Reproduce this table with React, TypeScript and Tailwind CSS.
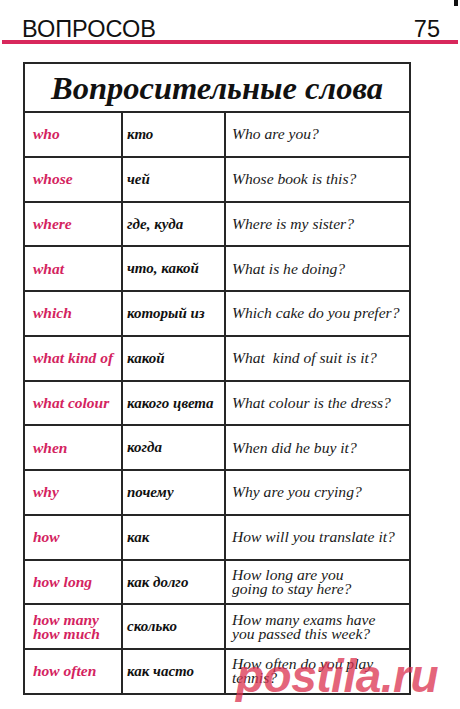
import { FC } from "react";

interface Row {
	en: string[];
	ru: string;
	ex: string[];
}

const rows: Row[] = [
	{ en: ["who"], ru: "кто", ex: ["Who are you?"] },
	{ en: ["whose"], ru: "чей", ex: ["Whose book is this?"] },
	{ en: ["where"], ru: "где, куда", ex: ["Where is my sister?"] },
	{ en: ["what"], ru: "что, какой", ex: ["What is he doing?"] },
	{ en: ["which"], ru: "который из", ex: ["Which cake do you prefer?"] },
	{ en: ["what kind of"], ru: "какой", ex: ["What  kind of suit is it?"] },
	{ en: ["what colour"], ru: "какого цвета", ex: ["What colour is the dress?"] },
	{ en: ["when"], ru: "когда", ex: ["When did he buy it?"] },
	{ en: ["why"], ru: "почему", ex: ["Why are you crying?"] },
	{ en: ["how"], ru: "как", ex: ["How will you translate it?"] },
	{ en: ["how long"], ru: "как долго", ex: ["How long are you", "going to stay here?"] },
	{ en: ["how many", "how much"], ru: "сколько", ex: ["How many exams have", "you passed this week?"] },
	{ en: ["how often"], ru: "как часто", ex: ["How often do you play", "tennis?"] },
];

const TableRow: FC<{ row: Row }> = ({ row }) => {
	return (
		<div className="flex h-[44.75px] border-t-2 border-[#262626]">
			<div className="w-[96px] flex flex-col justify-center pl-[8px] text-[15.5px] leading-[14px] font-bold italic text-[#d4245f] whitespace-nowrap">
				{row.en.map((l, i) => (
					<span key={i}>{l}</span>
				))}
			</div>
			<div className="w-[103px] border-l-2 border-[#262626] flex items-center pl-[4px] text-[15px] font-bold italic text-[#111] whitespace-nowrap">
				{row.ru}
			</div>
			<div className="flex-1 border-l-2 border-[#262626] flex flex-col justify-center pl-[6px] text-[15.6px] leading-[14px] italic text-[#1a1a1a] whitespace-pre">
				{row.ex.map((l, i) => (
					<span key={i}>{l}</span>
				))}
			</div>
		</div>
	);
};

export default function App() {
	return (
		<div className="relative w-[460px] h-[709px] bg-white overflow-hidden font-['Liberation_Serif',serif]">
			<div className="absolute right-[2px] top-0 w-[4px] h-[6px] bg-[#111]" />
			<div className="flex h-[40px] items-end justify-between pl-[22px] pr-[20px] font-['Liberation_Sans',Arial,sans-serif] text-[23.5px] leading-[21px] text-[#111]">
				<span>ВОПРОСОВ</span>
				<span>75</span>
			</div>
			<div className="mx-[2px] h-[4px] bg-[#d8285c]" />
			<div className="ml-[23px] mt-[18px] w-[388px] border-2 border-[#262626]">
				<div className="h-[47px] flex items-center justify-center pt-[2px] text-[32.5px] font-bold italic text-[#111]">
					Вопросительные слова
				</div>
				{rows.map((r, i) => (
					<TableRow key={i} row={r} />
				))}
			</div>
			<div className="absolute left-[236px] top-[642px] font-['Liberation_Sans',Arial,sans-serif] text-[46px] font-bold italic text-[#dc3250]/75 tracking-[-0.5px]">
				postila.ru
			</div>
		</div>
	);
}
